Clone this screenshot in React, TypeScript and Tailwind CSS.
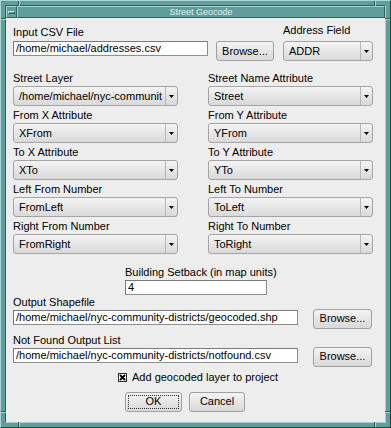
import React from 'react';

const Arrow = () => (
  <svg width="5" height="3" viewBox="0 0 5 3">
    <polygon points="0,0 5,0 2.5,3" fill="#000" />
  </svg>
);

const Select = ({ value }: { value: string }) => (
  <div className="flex h-[20px] items-stretch rounded-[3px] border border-[#a4a4a4] bg-linear-to-b from-[#f4f4f4] to-[#d9d9d9]">
    <div className="min-w-0 flex-1 overflow-hidden whitespace-nowrap pl-[5px] leading-[18px]">{value}</div>
    <div className="flex w-[12px] items-center justify-center border-l border-[#b8b8b8]">
      <Arrow />
    </div>
  </div>
);

const TextInput = ({ value, className = '' }: { value: string; className?: string }) => (
  <div
    className={`h-[15px] overflow-hidden whitespace-nowrap border border-[#8e8e8e] border-t-[#7a7a7a] border-l-[#7a7a7a] bg-white pl-[2px] leading-[13px] ${className}`}
  >
    {value}
  </div>
);

const Button = ({ label, className = '' }: { label: string; className?: string }) => (
  <div
    className={`flex h-[20px] items-center justify-center rounded-[3px] border border-[#a0a0a0] bg-linear-to-b from-[#f4f4f4] to-[#d8d8d8] ${className}`}
  >
    {label}
  </div>
);

const Field = ({ label, value }: { label: string; value: string }) => (
  <div className="flex flex-col">
    <div className="h-[13px] leading-[13px]">{label}</div>
    <div className="mt-[1.5px]">
      <Select value={value} />
    </div>
  </div>
);

const fields = [
  ['Street Layer', '/home/michael/nyc-communit'],
  ['Street Name Attribute', 'Street'],
  ['From X Attribute', 'XFrom'],
  ['From Y Attribute', 'YFrom'],
  ['To X Attribute', 'XTo'],
  ['To Y Attribute', 'YTo'],
  ['Left From Number', 'FromLeft'],
  ['Left To Number', 'ToLeft'],
  ['Right From Number', 'FromRight'],
  ['Right To Number', 'ToRight'],
];

// resize-corner notches in the mwm frame
const notches = [
  'left-[17px] top-0 h-[5px] w-[2px] border-l border-l-[#2f5f5c] border-r border-r-[#a9d2ce]',
  'left-[373px] top-0 h-[5px] w-[2px] border-l border-l-[#2f5f5c] border-r border-r-[#a9d2ce]',
  'left-[17px] bottom-0 h-[5px] w-[2px] border-l border-l-[#2f5f5c] border-r border-r-[#a9d2ce]',
  'left-[373px] bottom-0 h-[5px] w-[2px] border-l border-l-[#2f5f5c] border-r border-r-[#a9d2ce]',
  'left-0 top-[17px] w-[5px] h-[2px] border-t border-t-[#2f5f5c] border-b border-b-[#a9d2ce]',
  'right-0 top-[17px] w-[5px] h-[2px] border-t border-t-[#2f5f5c] border-b border-b-[#a9d2ce]',
  'left-0 top-[410px] w-[5px] h-[2px] border-t border-t-[#2f5f5c] border-b border-b-[#a9d2ce]',
  'right-0 top-[410px] w-[5px] h-[2px] border-t border-t-[#2f5f5c] border-b border-b-[#a9d2ce]',
];

export default function App() {
  return (
    <div className="relative h-[428px] w-[391px] border border-t-[#acd4d0] border-l-[#acd4d0] border-b-[#1f4543] border-r-[#1f4543] bg-[#5f9e9a] p-[4px] font-['Liberation_Sans',Arial,sans-serif] text-[11px] text-black">
      {notches.map((c, i) => (
        <div key={i} className={`absolute ${c}`} />
      ))}
      <div className="flex h-full flex-col border border-t-[#2f5f5c] border-l-[#2f5f5c] border-b-[#a9d2ce] border-r-[#a9d2ce]">
        {/* title bar */}
        <div className="flex h-[12px]">
          <div className="flex w-[11px] items-center justify-center border border-t-[#a9d2ce] border-l-[#a9d2ce] border-b-[#2f5f5c] border-r-[#2f5f5c]">
            <div className="h-[3px] w-[7px] border border-t-[#c8e4e1] border-l-[#c8e4e1] border-b-[#2f5f5c] border-r-[#2f5f5c]" />
          </div>
          <div className="flex flex-1 items-center justify-center border border-t-[#a9d2ce] border-l-[#a9d2ce] border-b-[#2f5f5c] border-r-[#2f5f5c] text-[9px] leading-[10px] text-[#e4efee]">
            Street Geocode
          </div>
        </div>

        {/* dialog body */}
        <div className="flex flex-1 flex-col bg-[#ededed] pl-[7px] pr-[12px] pt-[6px]">
          <div className="flex items-end">
            <div className="flex flex-col">
              <div className="h-[13px] leading-[13px]">Input CSV File</div>
              <div className="mt-[2px] flex h-[20px] items-start gap-[8px]">
                <TextInput value="/home/michael/addresses.csv" className="w-[195px]" />
                <Button label="Browse..." className="w-[58px]" />
              </div>
            </div>
            <div className="ml-auto flex w-[90px] flex-col">
              <div className="h-[13px] leading-[13px]">Address Field</div>
              <div className="mt-[4px]">
                <Select value="ADDR" />
              </div>
            </div>
          </div>

          <div className="mt-[10.5px] grid grid-cols-2 gap-x-[30px] gap-y-[2.5px]">
            {fields.map(([l, v]) => (
              <Field key={l} label={l} value={v} />
            ))}
          </div>

          <div className="mt-[11.5px] flex flex-col items-start pl-[112px]">
            <div className="h-[13px] leading-[13px]">Building Setback (in map units)</div>
            <TextInput value="4" className="mt-[1.5px] w-[142px]" />
          </div>

          <div className="mt-[0.5px] flex flex-col">
            <div className="h-[13px] leading-[13px]">Output Shapefile</div>
            <div className="flex h-[20px] items-start gap-[15px]">
              <TextInput value="/home/michael/nyc-community-districts/geocoded.shp" className="mt-[1.5px] w-[285px]" />
              <Button label="Browse..." className="w-[59px]" />
            </div>
          </div>

          <div className="mt-[5px] flex flex-col">
            <div className="h-[13px] leading-[13px]">Not Found Output List</div>
            <div className="flex h-[20px] items-start gap-[15px]">
              <TextInput value="/home/michael/nyc-community-districts/notfound.csv" className="mt-[1.5px] w-[285px]" />
              <Button label="Browse..." className="w-[59px]" />
            </div>
          </div>

          <div className="mt-[4.5px] flex h-[13px] items-center gap-[5px] pl-[105px]">
            <svg width="9" height="9" viewBox="0 0 9 9">
              <rect x="0.5" y="0.5" width="8" height="8" fill="#fff" stroke="#2a2a2a" />
              <path d="M2 2L7 7M7 2L2 7" stroke="#000" strokeWidth="1.8" />
            </svg>
            <span className="leading-[13px]">Add geocoded layer to project</span>
          </div>

          <div className="mt-[7.5px] flex gap-[7px] pl-[112px]">
            <Button
              label="OK"
              className="w-[57px] border-[#555] outline-1 outline-dotted outline-offset-[-4px] outline-[#333]"
            />
            <Button label="Cancel" className="w-[56px]" />
          </div>
        </div>
      </div>
    </div>
  );
}
